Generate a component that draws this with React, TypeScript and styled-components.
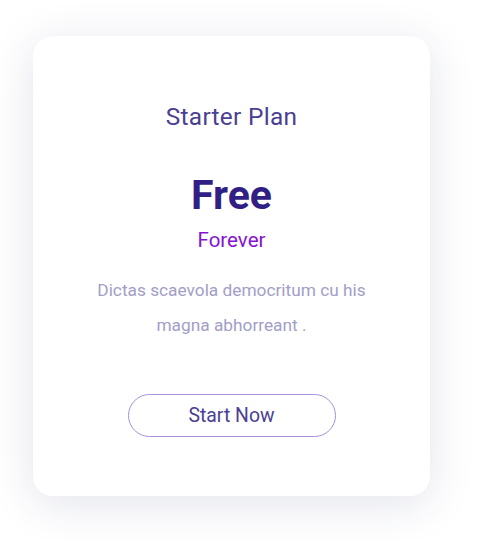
import React from "react";
import styled, { createGlobalStyle } from "styled-components";

const Global = createGlobalStyle`
  html, body { margin: 0; padding: 0; background: #ffffff; }
  body { font-family: Roboto, "Noto Sans", sans-serif; }
`;

const Page = styled.div`
  min-height: 540px;
  box-sizing: border-box;
  padding: 36px 0 0 33px;
`;

const Card = styled.div`
  width: 397px;
  height: 460px;
  box-sizing: border-box;
  background: #fff;
  border-radius: 20px;
  box-shadow: 0 8px 45px rgba(40, 45, 110, 0.13);
  display: flex;
  flex-direction: column;
  align-items: center;
  padding-top: 66px;
  text-align: center;
`;

const Title = styled.h3`
  margin: 0;
  font-size: 24.4px;
  font-weight: 400;
  line-height: 30px;
  color: #4b3f92;
  letter-spacing: 0.3px;
`;

const Price = styled.div`
  margin-top: 40px;
  font-size: 41px;
  font-weight: 700;
  line-height: 46px;
  color: #321f86;
`;

const Period = styled.div`
  margin-top: 9px;
  font-size: 20.5px;
  line-height: 26px;
  color: #8513d0;
`;

const Desc = styled.p`
  margin: 20px 0 0;
  font-size: 17.3px;
  line-height: 35px;
  color: #a29ec6;
  max-width: 310px;
`;

const Button = styled.button`
  margin-top: 51px;
  width: 208px;
  height: 43px;
  border-radius: 22px;
  border: 1px solid #a890d8;
  background: #fff;
  font-family: Roboto, sans-serif;
  font-size: 19.4px;
  color: #4b3f92;
  cursor: pointer;
`;

export default function App() {
  return (
    <>
      <Global />
      <Page>
        <Card>
          <Title>Starter Plan</Title>
          <Price>Free</Price>
          <Period>Forever</Period>
          <Desc>Dictas scaevola democritum cu his magna abhorreant .</Desc>
          <Button>Start Now</Button>
        </Card>
      </Page>
    </>
  );
}
